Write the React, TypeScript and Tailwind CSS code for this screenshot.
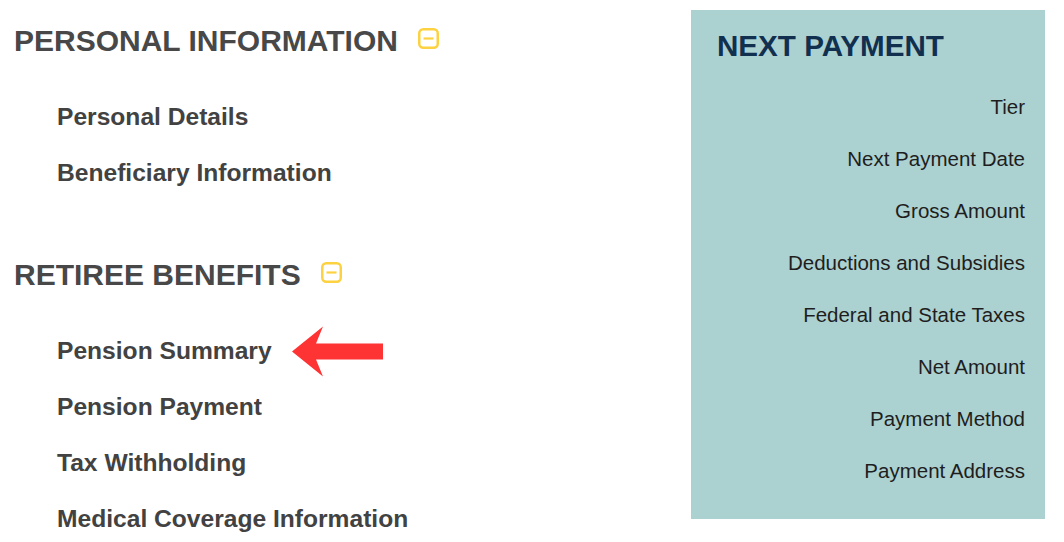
const personal = ['Personal Details', 'Beneficiary Information'];
const retiree = ['Pension Summary', 'Pension Payment', 'Tax Withholding', 'Medical Coverage Information'];
const payment = [
  'Tier',
  'Next Payment Date',
  'Gross Amount',
  'Deductions and Subsidies',
  'Federal and State Taxes',
  'Net Amount',
  'Payment Method',
  'Payment Address',
];

function MinusBox() {
  return (
    <svg width="21" height="21" viewBox="0 0 21 21" className="ml-[20px] -mt-[5px] h-[21px] w-[21px] shrink-0">
      <rect x="1.25" y="1.25" width="18.5" height="18.5" rx="4" fill="none" stroke="#fdd240" strokeWidth="2.5" />
      <line x1="5.5" y1="10.5" x2="15.5" y2="10.5" stroke="#fdd240" strokeWidth="2.2" />
    </svg>
  );
}

function Arrow() {
  return (
    <svg width="92" height="51" viewBox="0 0 92 51" className="ml-[20px] shrink-0">
      <polygon points="0,25.5 31,0.5 24,17.5 91,17.5 91,33.5 24,33.5 31,50.5" fill="#fe3333" />
    </svg>
  );
}

function SectionHeading({ title }: { title: string }) {
  return (
    <h2 className="flex h-[40px] items-center text-[30px] font-bold leading-[40px] text-[#484848]">
      <span>{title}</span>
      <MinusBox />
    </h2>
  );
}

function NavItem({ label, arrow }: { label: string; arrow?: boolean }) {
  return (
    <li className="flex h-[56px] items-center pl-[43px] text-[24.6px] font-bold text-[#424242]">
      <span>{label}</span>
      {arrow && <Arrow />}
    </li>
  );
}

export default function App() {
  return (
    <div className="flex h-[542px] w-[1064px] overflow-hidden bg-white font-['Liberation_Sans',Arial,sans-serif]">
      <div className="flex-1 pl-[14px] pt-[21px]">
        <SectionHeading title="PERSONAL INFORMATION" />
        <ul className="mt-[28px]">
          {personal.map((p) => (
            <NavItem key={p} label={p} />
          ))}
        </ul>
        <div className="mt-[54px]">
          <SectionHeading title="RETIREE BENEFITS" />
        </div>
        <ul className="mt-[28px]">
          {retiree.map((r) => (
            <NavItem key={r} label={r} arrow={r === 'Pension Summary'} />
          ))}
        </ul>
      </div>
      <div className="mr-[19px] mt-[10px] h-[509px] w-[354px] bg-[#acd1d1] pl-[26px] pr-[20px] pt-[18px]">
        <h3 className="text-[29.6px] font-bold leading-[36px] text-[#11304f]">NEXT PAYMENT</h3>
        <ul className="mt-[17.5px]">
          {payment.map((p) => (
            <li key={p} className="flex h-[52px] items-center justify-end text-[20.5px] text-[#1e1e1e]">
              {p}
            </li>
          ))}
        </ul>
      </div>
    </div>
  );
}
